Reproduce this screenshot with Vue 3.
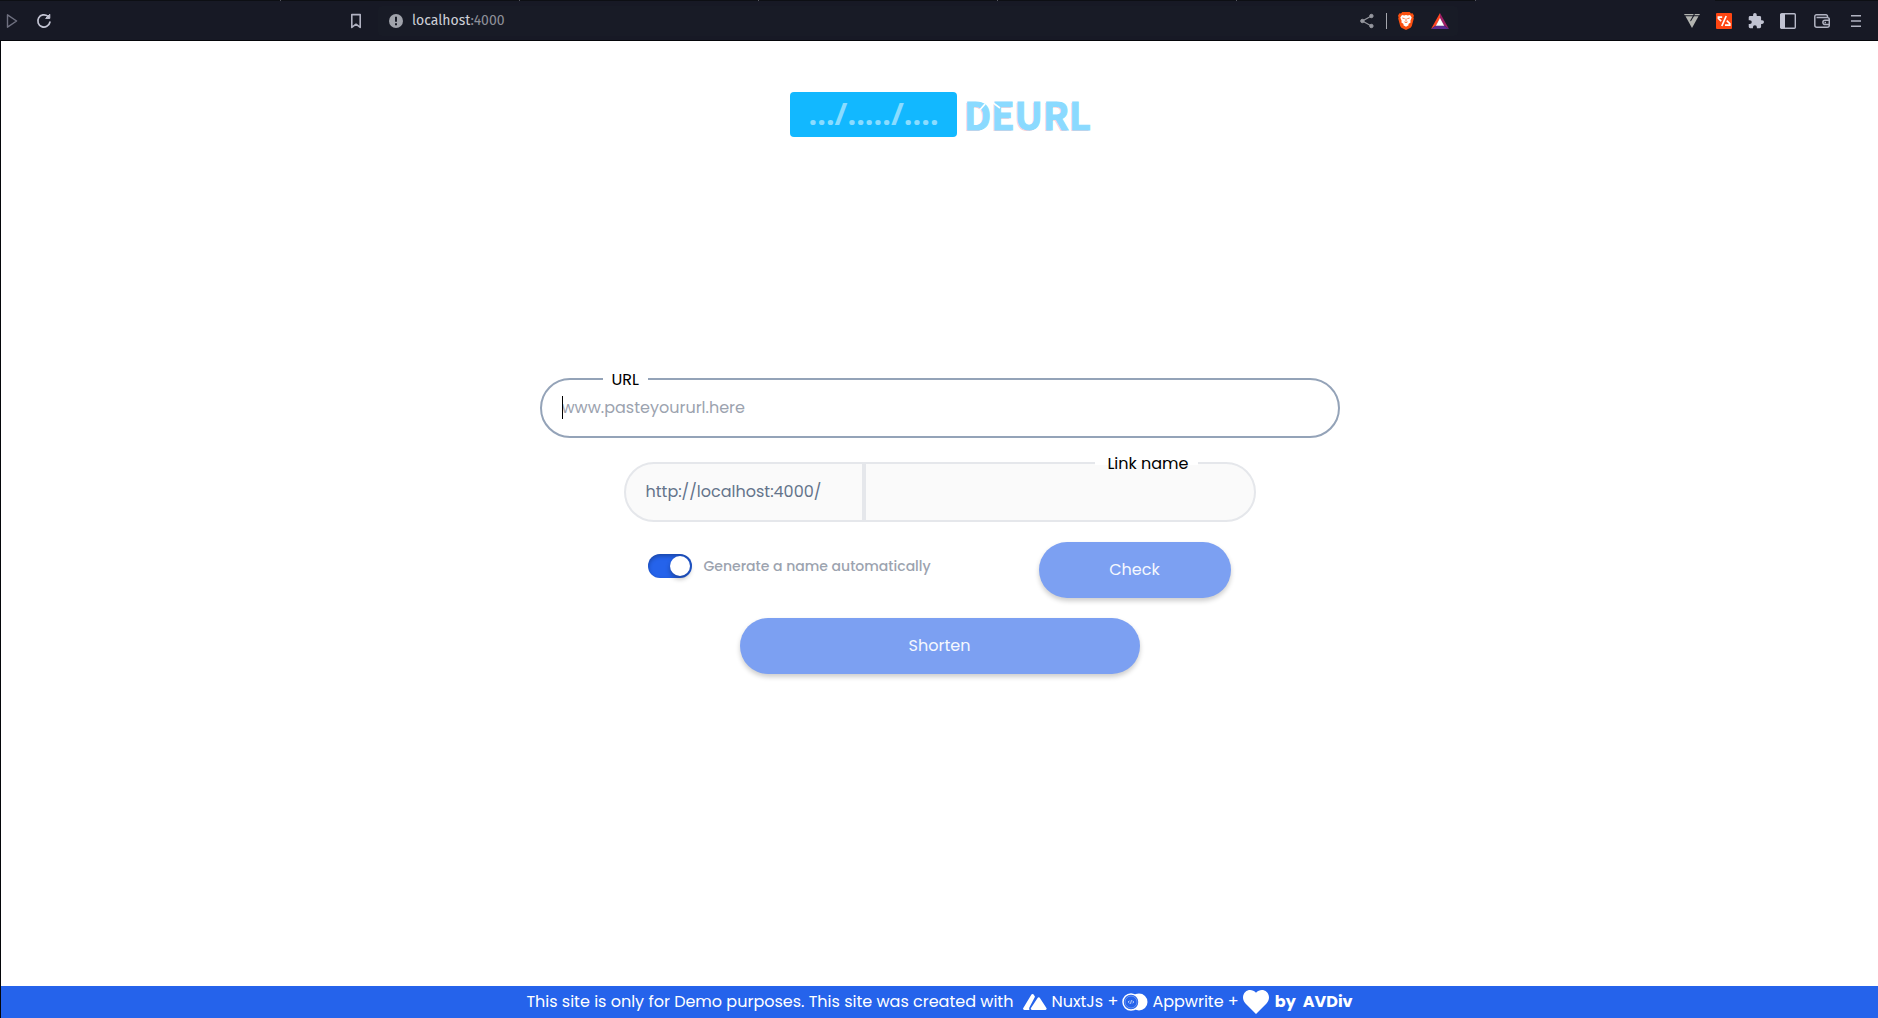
<script setup>
import { ref } from 'vue'

const url = ref('')
const linkName = ref('')
const autoName = ref(true)
const tabs = [1, 2, 3, 4, 5, 6, 7]
</script>

<template>
  <div class="window">
    <header class="browser">
      <div class="tabs">
        <span v-for="t in tabs" :key="t" class="tab" :class="{ active: t === 7 }"></span>
      </div>
      <div class="toolbar">
        <nav class="nav">
          <button class="icon-btn" aria-label="Forward">
            <svg width="16" height="16" viewBox="0 0 16 16" fill="none" stroke="#6f7080" stroke-width="1.4" stroke-linejoin="round"><path d="M3.5 1.8v12.4L12.6 8z" /></svg>
          </button>
          <button class="icon-btn reload" aria-label="Reload">
            <svg width="16" height="16" viewBox="0 0 16 16" fill="none" stroke="#c3c4d3" stroke-width="1.7" stroke-linecap="round"><path d="M13.9 9.2A6.1 6.1 0 1 1 11.8 3.2" /><path d="M13.8 1.6v3.8H10z" fill="#c3c4d3" stroke-width="1" stroke-linejoin="round" /></svg>
          </button>
          <button class="icon-btn bookmark" aria-label="Bookmark">
            <svg width="16" height="16" viewBox="0 0 16 16" fill="none" stroke="#b1b2c2" stroke-width="1.6" stroke-linejoin="round"><path d="M3.8 1.6h8.4v12.8L8 11.2l-4.2 3.2z" /></svg>
          </button>
        </nav>
        <div class="address">
          <svg width="14" height="14" viewBox="0 0 14 14"><circle cx="7" cy="7" r="7" fill="#a0a3ab" /><path d="M6 2.8h2v5H6zM6 9.2h2v2H6z" fill="#181b26" /></svg>
          <span class="host">localhost<span class="port">:4000</span></span>
          <button class="icon-btn" aria-label="Share">
            <svg width="16" height="16" viewBox="0 0 16 16" fill="#96989f" stroke="#96989f"><path d="M12.4 3 3.4 8l9 5" fill="none" stroke-width="1.2" /><circle cx="12.4" cy="3" r="1.7" /><circle cx="3.4" cy="8" r="1.7" /><circle cx="12.4" cy="13" r="1.7" /></svg>
          </button>
          <span class="rule"></span>
          <button class="icon-btn" aria-label="Shields">
            <svg width="16" height="18" viewBox="0 0 16 18"><path d="M4.3 0h7.4l1.3 1.5 1.6-.2L16 3.7l-.6 1.6.4 1.2-2 7.6-1.2 1.7L8 18l-4.6-2.2-1.2-1.7-2-7.6.4-1.2L0 3.7l1.4-2.4 1.6.2z" fill="#fb5010" /><path d="M4 3l2.200.4L8 3l1.800.4L12 3l1.700 2.400-1.300 3.400.2 1.600-2.200 1.600.2 1.200L8 14.800l-2.600-1.600.2-1.200-2.200-1.600.2-1.600-1.300-3.400z" fill="#fff" /><path d="m4.300 6 2.400.7M11.700 6l-2.400.7M8 6.500v3M6.400 9.800 8 10.700l1.600-.9" fill="none" stroke="#fb5010" stroke-width=".8" /></svg>
          </button>
          <button class="icon-btn rewards" aria-label="Rewards">
            <svg width="18" height="16" viewBox="0 0 18 16"><path d="M9 0v5.500L5 12.600 0 16z" fill="#ff4724" /><path d="m9 0 9 16-5-3.400L9 5.500z" fill="#9e1f63" /><path d="m0 16 5-3.400h8l5 3.400z" fill="#5b2d90" /><path d="m9 5 4.200 7.700H4.800z" fill="#fff" /></svg>
          </button>
        </div>
        <div class="tools">
          <button class="icon-btn" aria-label="Vue extension">
            <svg width="16" height="16" viewBox="0 0 16 16" fill="#b2b3b0"><path d="M0 1h9.800L9 2.300H.8zM11 1h5l-.8 1.300h-5z" /><path d="M1.500 3.300h7.200L6.200 7.600l.6 1 3.200-5.300h4.500L8 15z" /></svg>
          </button>
          <button class="icon-btn" aria-label="Link extension">
            <svg width="16" height="16" viewBox="0 0 16 16"><rect width="16" height="16" rx="1" fill="#ff4612" /><path d="m10.200 3-4.400 10M6.200 4.200H2.400v1.300L5.200 8.200M10.800 7.600l3 3v1.500H9" fill="none" stroke="#fff" stroke-width="1.700" /></svg>
          </button>
          <button class="icon-btn" aria-label="Extensions">
            <svg width="16" height="16" viewBox="1 1 22 22" fill="#c1c3d2"><path d="M20.500 11H19V7a2 2 0 0 0-2-2h-4V3.500a2.500 2.500 0 0 0-5 0V5H4a2 2 0 0 0-2 2v3.800h1.500a2.700 2.700 0 0 1 0 5.400H2V20a2 2 0 0 0 2 2h3.800v-1.500a2.700 2.700 0 0 1 5.400 0V22H17a2 2 0 0 0 2-2v-4h1.500a2.500 2.500 0 0 0 0-5z" /></svg>
          </button>
          <button class="icon-btn" aria-label="Sidebar">
            <svg width="16" height="16" viewBox="0 0 16 16"><rect x=".7" y=".7" width="14.600" height="14.600" rx="1" fill="none" stroke="#b8bac9" stroke-width="1.400" /><path d="M0 1h5v14H0z" fill="#c1c3d2" /></svg>
          </button>
          <button class="icon-btn wallet" aria-label="Wallet">
            <svg width="16" height="16" viewBox="0 0 16 16" fill="none" stroke="#b1b3c2" stroke-width="1.500"><path d="M13.500 4.500V3.300a1.500 1.500 0 0 0-1.500-1.500H2.500a1.700 1.700 0 0 0-1.700 1.700v8.700a2 2 0 0 0 2 2h10.500a2 2 0 0 0 2-2V6.500a2 2 0 0 0-2-2H2.500" /><path d="M15 7.300h-4a2.100 2.100 0 0 0 0 4.200h4M10.500 9.400h1.500" /></svg>
          </button>
          <button class="icon-btn menu" aria-label="Menu">
            <svg width="10" height="12" viewBox="0 0 10 12" fill="#b1b3c2"><path d="M0 0h10v1.600H0zM0 5.200h10v1.600H0zM0 10.400h10V12H0z" /></svg>
          </button>
        </div>
      </div>
    </header>

    <div class="page">
      <h1 class="logo">
        <span class="badge">.../...../....</span>
        <span class="name">DEURL
          <svg class="cuts" width="50" height="28" viewBox="0 0 50 28" fill="none" stroke="#fff" stroke-width="1.600"><path d="M14 10 21 2" /><path d="m28 0 8 6" /></svg>
        </span>
      </h1>

      <main class="main">
        <form class="form" @submit.prevent>
          <div class="field">
            <label for="url" class="caption start">URL</label>
            <input id="url" v-model="url" type="text" placeholder="www.pasteyoururl.here" />
            <span class="caret"></span>
          </div>
          <div class="link">
            <span class="prefix">http://localhost:4000/</span>
            <input id="link-name" v-model="linkName" type="text" disabled />
            <label for="link-name" class="caption end">Link name</label>
          </div>
          <div class="options">
            <label class="toggle">
              <input v-model="autoName" type="checkbox" />
              <span>Generate a name automatically</span>
            </label>
            <button type="button" class="btn check" disabled>Check</button>
          </div>
          <button type="submit" class="btn shorten" disabled>Shorten</button>
        </form>
      </main>

      <footer class="footer">
        <span class="note">This site is only for Demo purposes. This site was created with</span>
        <svg width="24" height="16" viewBox="0 0 24 16" fill="#fff"><path d="M8.300.8a1.400 1.400 0 0 1 2.500 0l1.200 2L6.500 13.300c-.5 1-.4 1.800 0 2.700H1.400A1.300 1.300 0 0 1 .3 14z" /><path d="M14.600 4a1.300 1.300 0 0 1 2.300 0l6.500 10a1.300 1.300 0 0 1-1.100 2H9.100A1.300 1.300 0 0 1 8 14z" /></svg>
        <span>NuxtJs +</span>
        <svg width="26" height="18" viewBox="0 0 26 18"><circle cx="17" cy="9" r="8.500" fill="#fff" /><circle cx="9" cy="9" r="8" fill="#2563eb" stroke="#fff" stroke-width="1.500" /><circle cx="9" cy="9" r="6" fill="none" stroke="#fff" stroke-width=".3" /><path d="M7.500 7.700 6.200 9l1.300 1.300M10.500 7.700 11.800 9l-1.300 1.300M9.500 7.200l-1 3.600" fill="none" stroke="#fff" stroke-width=".7" /></svg>
        <span>Appwrite +</span>
        <svg width="26" height="24" viewBox="0 0 26 24" fill="#fff"><path d="M13 24 2.500 13.500C-1 9.900-.6 4.700 2.300 2 5.400-.8 10-.5 13 2.800 16-.5 20.600-.8 23.700 2c2.900 2.700 3.300 7.900-.2 11.500z" /></svg>
        <strong class="by">by</strong>
        <strong>AVDiv</strong>
      </footer>
    </div>
  </div>
</template>

<style>
body {
  margin: 0;
}
</style>

<style scoped>
* {
  box-sizing: border-box;
}
.window {
  display: flex;
  flex-direction: column;
  min-height: 100vh;
  background: #fff;
  color: #000;
  font-family: Poppins, Inter, sans-serif;
  font-size: 16px;
  line-height: 24px;
}
button,
input {
  font: inherit;
}
.browser {
  background: #171925;
  border-bottom: 1px solid #05060a;
}
.tabs {
  display: flex;
  height: 1px;
  padding-left: 42px;
  background: #0d0f14;
}
.tab {
  flex: 0 1 239px;
  border-right: 1px solid #55565e;
}
.tab.active {
  border: 0;
  background: #171925;
}
.toolbar {
  display: grid;
  grid-template-columns: 378fr 1080fr 420fr;
  align-items: center;
  height: 39px;
}
.nav,
.tools,
.address {
  display: flex;
  align-items: center;
}
.nav {
  padding: 0 14px 0 4px;
}
.icon-btn {
  display: flex;
  padding: 0;
  border: 0;
  background: none;
}
.reload {
  margin-left: 16px;
}
.bookmark {
  margin-left: auto;
}
.address {
  height: 30px;
  padding: 0 9px 0 11px;
  border-radius: 4px;
  background: #181b26;
}
.host {
  flex: 1;
  padding-left: 9px;
  color: #cfd1d8;
  font-family: "Fira Sans", "Noto Sans", sans-serif;
  font-size: 14px;
}
.port {
  color: #8d8f98;
}
.rule {
  width: 1px;
  height: 16px;
  margin: 0 11px;
  background: #a5a7ae;
}
.rewards {
  margin-left: 17px;
}
.tools {
  justify-content: flex-end;
  gap: 16px;
  padding-right: 17px;
}
.wallet {
  margin-left: 2px;
}
.menu {
  margin-left: 5px;
}
.page {
  display: flex;
  flex: 1;
  flex-direction: column;
  border-left: 1px solid #05060a;
}
.logo {
  display: flex;
  justify-content: center;
  gap: 7px;
  height: 48px;
  margin: 51px 0 0;
  padding-left: 2px;
  font-family: "Noto Sans", sans-serif;
  font-weight: 700;
}
.badge {
  width: 167px;
  height: 45px;
  border-radius: 4px;
  background: #12b8ff;
  color: #8adcff;
  font-size: 31px;
  line-height: 42px;
  text-align: center;
}
.name {
  position: relative;
  color: #8adaff;
  font-family: "Noto Sans CJK JP", "Noto Sans", sans-serif;
  font-size: 38px;
  line-height: 44px;
  text-shadow: -1px 1px 0 #f8cdd2;
  -webkit-text-stroke: 1px #8adaff;
}
.cuts {
  position: absolute;
  top: 10px;
  left: 0;
}
.main {
  display: flex;
  flex: 1;
  flex-direction: column;
  justify-content: center;
  align-items: center;
  padding: 0 20px 74px;
}
.form {
  display: flex;
  flex-direction: column;
  align-items: center;
  width: 100%;
  max-width: 800px;
}
.field {
  position: relative;
  width: 100%;
}
.field input {
  display: block;
  width: 100%;
  height: 60px;
  padding: 0 20px 2px;
  border: 2px solid #94a3b8;
  border-radius: 30px;
  outline: 0;
  background: #fff;
}
.field input::placeholder {
  color: #9ca3af;
  opacity: 1;
}
.caret {
  position: absolute;
  top: 18px;
  left: 22px;
  width: 1px;
  height: 23px;
  background: #000;
}
.caption {
  position: absolute;
  top: -10px;
  background: linear-gradient(#fff 13px, transparent 13px);
}
.start {
  left: 63px;
  padding: 0 9px;
}
.end {
  right: 56px;
  padding: 0 9px 0 12px;
}
.link {
  position: relative;
  display: flex;
  width: 100%;
  max-width: 632px;
  height: 60px;
  margin-top: 24px;
  border: 2px solid #e5e7eb;
  border-radius: 30px;
  background: #fafafa;
}
.link .caption {
  top: -12px;
}
.prefix {
  flex: 0 0 236px;
  padding: 16px 20px;
  color: #64748b;
}
.link input {
  flex: 1;
  min-width: 0;
  border: 0;
  border-left: 4px solid #e5e7eb;
  border-radius: 0 28px 28px 0;
  background: transparent;
}
.options {
  display: flex;
  justify-content: space-between;
  align-items: flex-start;
  width: 100%;
  max-width: 632px;
  margin: 20px 0;
  padding: 0 25px 0 24px;
}
.toggle {
  display: flex;
  align-items: center;
  gap: 12px;
  padding-top: 12px;
  color: #9ca3af;
  font-size: 14px;
  font-weight: 500;
}
.toggle input {
  display: flex;
  justify-content: flex-end;
  width: 44px;
  height: 24px;
  margin: 0;
  padding: 2px;
  border-radius: 12px;
  appearance: none;
  background: #2563eb;
  box-shadow: inset 0 2px 4px rgba(0, 0, 0, 0.3);
}
.toggle input::before {
  width: 20px;
  height: 20px;
  border-radius: 50%;
  background: #fff;
  box-shadow: 0 3px 5px rgba(0, 0, 0, 0.3);
  content: "";
}
.toggle input:not(:checked) {
  justify-content: flex-start;
  background: #e5e7eb;
}
.btn {
  height: 56px;
  padding: 0;
  border: 0;
  border-radius: 28px;
  background: #7ca0f2;
  box-shadow: 0 3px 5px rgba(0, 0, 0, 0.2);
  color: #f5f8fe;
}
.check {
  width: 192px;
}
.shorten {
  width: 400px;
}
.footer {
  display: flex;
  justify-content: center;
  align-items: center;
  height: 32px;
  gap: 4px;
  background: #2563eb;
  color: #fff;
}
.note {
  margin-right: 6px;
}
.by {
  margin: 0 3px 0 2px;
}
</style>
